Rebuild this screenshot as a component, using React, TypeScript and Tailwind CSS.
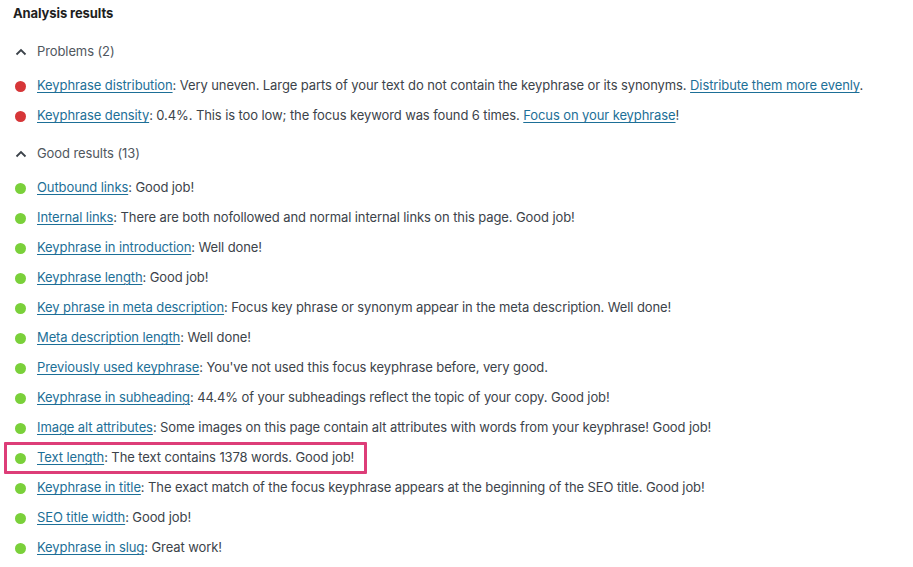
import React from "react";

type Part = { text: string; link?: boolean };

const problems: Part[][] = [
  [
    { text: "Keyphrase distribution", link: true },
    { text: ": Very uneven. Large parts of your text do not contain the keyphrase or its synonyms. " },
    { text: "Distribute them more evenly", link: true },
    { text: "." },
  ],
  [
    { text: "Keyphrase density", link: true },
    { text: ": 0.4%. This is too low; the focus keyword was found 6 times. " },
    { text: "Focus on your keyphrase", link: true },
    { text: "!" },
  ],
];

const good: [string, string][] = [
  ["Outbound links", ": Good job!"],
  ["Internal links", ": There are both nofollowed and normal internal links on this page. Good job!"],
  ["Keyphrase in introduction", ": Well done!"],
  ["Keyphrase length", ": Good job!"],
  ["Key phrase in meta description", ": Focus key phrase or synonym appear in the meta description. Well done!"],
  ["Meta description length", ": Well done!"],
  ["Previously used keyphrase", ": You've not used this focus keyphrase before, very good."],
  ["Keyphrase in subheading", ": 44.4% of your subheadings reflect the topic of your copy. Good job!"],
  ["Image alt attributes", ": Some images on this page contain alt attributes with words from your keyphrase! Good job!"],
  ["Text length", ": The text contains 1378 words. Good job!"],
  ["Keyphrase in title", ": The exact match of the focus keyphrase appears at the beginning of the SEO title. Good job!"],
  ["SEO title width", ": Good job!"],
  ["Keyphrase in slug", ": Great work!"],
];

const Chevron = () => (
  <svg width="14" height="14" viewBox="0 0 14 14" className="text-[#3c434a] ml-[1px]">
    <path d="M2.5 9.5 L7 5 L11.5 9.5" fill="none" stroke="currentColor" strokeWidth="1.8" />
  </svg>
);

const Row = ({ color, parts, boxed }: { color: string; parts: Part[]; boxed?: boolean }) => (
  <li className="relative flex items-center h-[30px]">
    {boxed && (
      <span className="absolute left-[-9px] top-[-1px] w-[363px] h-[32px] border-[3px] border-[#dd3d78] rounded-[1px]" />
    )}
    <span className={`w-[11px] h-[11px] rounded-full ml-[2px] mr-[11px] shrink-0 ${color}`} />
    <p className="whitespace-nowrap">
      {parts.map((p, i) =>
        p.link ? (
          <a key={i} href="#" className="text-[#1d6f97] underline underline-offset-[2px] decoration-[1px]">
            {p.text}
          </a>
        ) : (
          <span key={i}>{p.text}</span>
        )
      )}
    </p>
  </li>
);

export default function App() {
  return (
    <div className="bg-white w-[913px] h-[567px] px-[13px] pt-[1px] text-[13px] tracking-[-0.1px] text-[#3c434a] font-['Inter',sans-serif]">
      {/* Heading */}
      <h2 className="h-[26px] flex items-center font-bold text-[#1e1e1e]">Analysis results</h2>

      {/* Problems */}
      <div className="mt-[12px] h-[26px] flex items-center gap-[9px] text-[#50575e]">
        <Chevron />
        <span>Problems (2)</span>
      </div>
      <ul className="mt-[6px]">
        {problems.map((parts, i) => (
          <Row key={i} color="bg-[#d63638]" parts={parts} />
        ))}
      </ul>

      {/* Good results */}
      <div className="mt-[10px] h-[26px] flex items-center gap-[9px] text-[#50575e]">
        <Chevron />
        <span>Good results (13)</span>
      </div>
      <ul className="mt-[6px]">
        {good.map(([title, text], i) => (
          <Row
            key={i}
            color="bg-[#7ad03a]"
            parts={[{ text: title, link: true }, { text }]}
            boxed={title === "Text length"}
          />
        ))}
      </ul>
    </div>
  );
}
